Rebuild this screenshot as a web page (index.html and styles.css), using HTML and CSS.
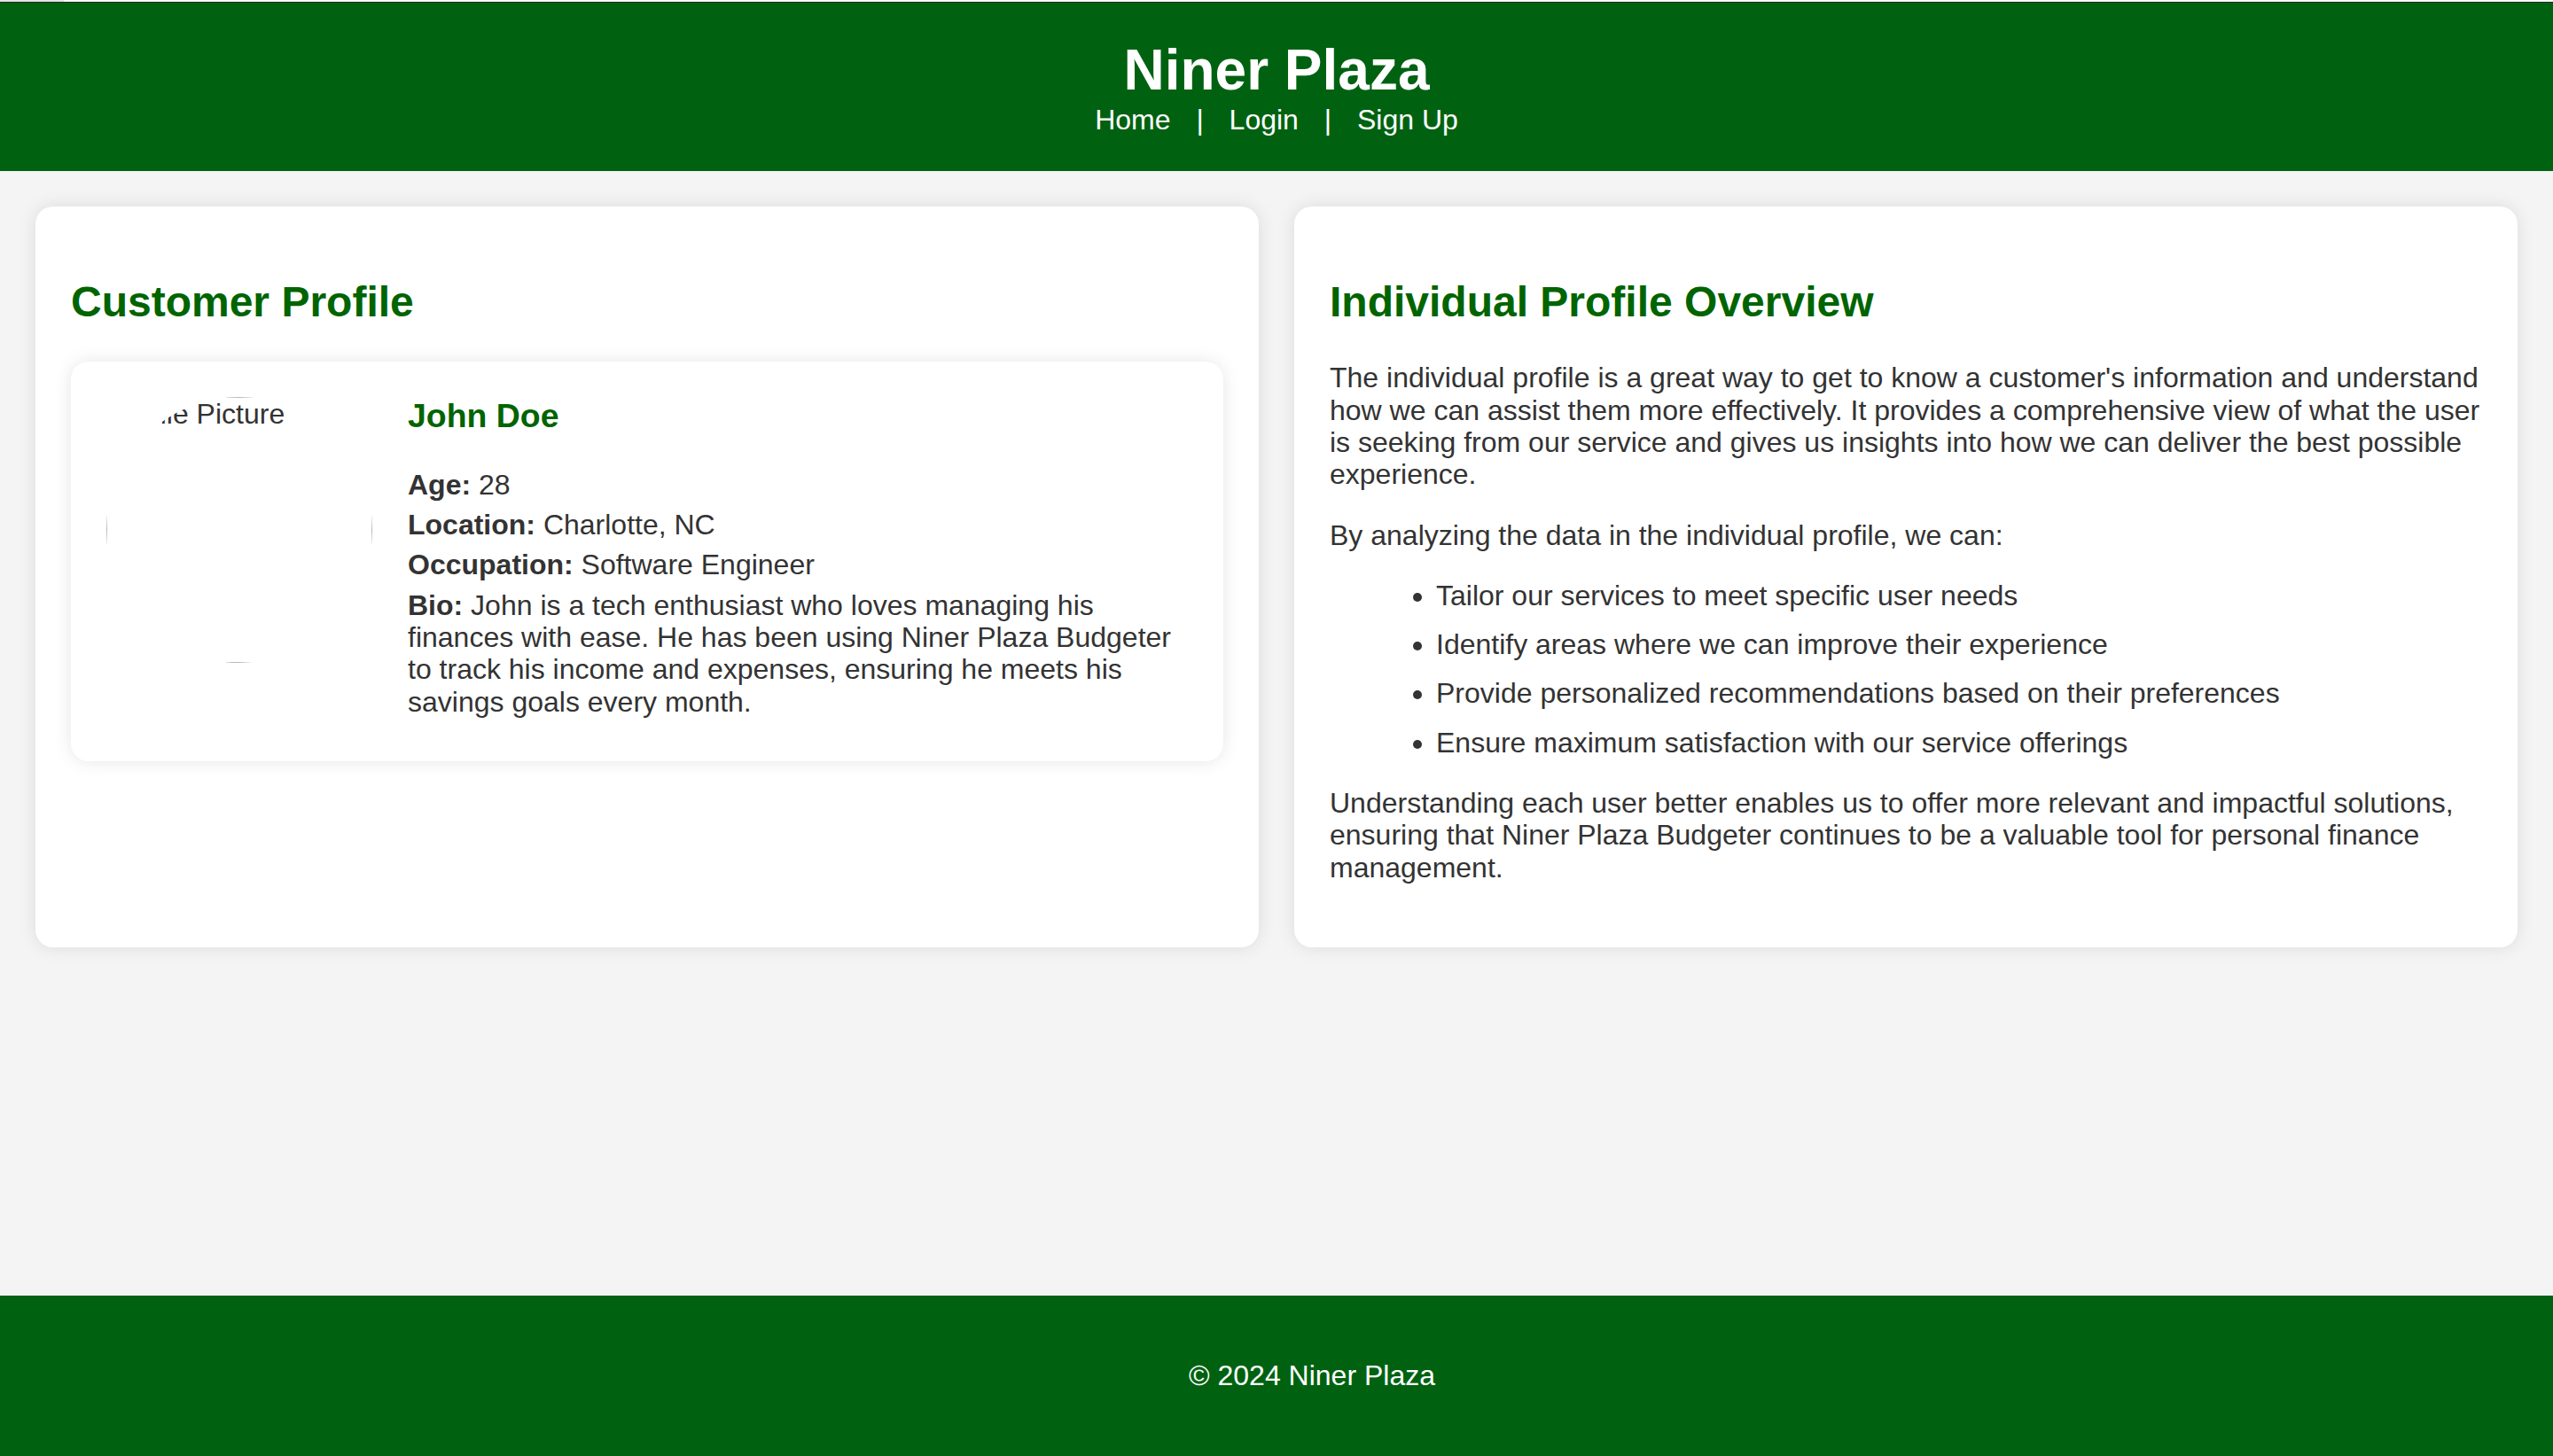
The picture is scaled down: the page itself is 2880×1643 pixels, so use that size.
FILE: index.html
```html
<!DOCTYPE html>
<html lang="en">
<head>
<meta charset="UTF-8">
<title>Niner Plaza - Customer Profile</title>
<link rel="stylesheet" href="styles.css">
</head>
<body>
<div class="topbar"></div>
<header class="site-header">
  <h1 class="site-title">Niner Plaza</h1>
  <nav class="site-nav">
    <a href="#">Home</a> | <a href="#">Login</a> | <a href="#">Sign Up</a>
  </nav>
</header>
<main class="content">
  <section class="card">
    <h2 class="card-title">Customer Profile</h2>
    <div class="profile">
      <div class="avatar"><div class="avatar-alt">Profile Picture</div></div>
      <div class="profile-info">
        <h3 class="profile-name">John Doe</h3>
        <p class="profile-line"><strong>Age:</strong> 28</p>
        <p class="profile-line"><strong>Location:</strong> Charlotte, NC</p>
        <p class="profile-line"><strong>Occupation:</strong> Software Engineer</p>
        <p class="profile-line"><strong>Bio:</strong> John is a tech enthusiast who loves managing his finances with ease. He has been using Niner Plaza Budgeter to track his income and expenses, ensuring he meets his savings goals every month.</p>
      </div>
    </div>
  </section>
  <section class="card">
    <h2 class="card-title">Individual Profile Overview</h2>
    <p class="text">The individual profile is a great way to get to know a customer's information and understand how we can assist them more effectively. It provides a comprehensive view of what the user is seeking from our service and gives us insights into how we can deliver the best possible experience.</p>
    <p class="text">By analyzing the data in the individual profile, we can:</p>
    <ul class="list">
      <li>Tailor our services to meet specific user needs</li>
      <li>Identify areas where we can improve their experience</li>
      <li>Provide personalized recommendations based on their preferences</li>
      <li>Ensure maximum satisfaction with our service offerings</li>
    </ul>
    <p class="text">Understanding each user better enables us to offer more relevant and impactful solutions, ensuring that Niner Plaza Budgeter continues to be a valuable tool for personal finance management.</p>
  </section>
</main>
<footer class="site-footer">
  <p class="footer-text">&copy; 2024 Niner Plaza</p>
</footer>
</body>
</html>
```

FILE: styles.css
```css
html, body {
  margin: 0;
  padding: 0;
}

body {
  font-family: "Liberation Sans", Arial, Helvetica, sans-serif;
  font-size: 32px;
  line-height: 36.3px;
  color: #333;
  background: #f4f4f4;
  min-height: 100vh;
  display: flex;
  flex-direction: column;
}

.topbar {
  height: 2px;
  background: linear-gradient(to right, #e4e4e4 72px, #fafafa 72px);
}

.site-header {
  background: #006211;
  border-top: 1px solid #1e2e1e;
  color: #fff;
  text-align: center;
  padding: 40px;
}

.site-title {
  margin: 0;
  font-size: 64px;
  font-weight: bold;
  line-height: 73.6px;
}

.site-nav {
  font-size: 32px;
  line-height: 36.8px;
}

.site-nav a {
  color: #fff;
  text-decoration: none;
  margin: 0 20px;
}

.content {
  flex: 1;
  padding: 40px;
  display: grid;
  grid-template-columns: 1fr 1fr;
  gap: 40px;
  align-content: start;
}

.card {
  background: #fff;
  border-radius: 20px;
  padding: 40px;
  box-shadow: 0 0 20px rgba(0, 0, 0, 0.1);
}

.card-title {
  color: #006400;
  font-size: 48px;
  line-height: 55px;
  margin: 40px 0;
}

.profile {
  display: flex;
  align-items: flex-start;
  gap: 40px;
  padding: 40px;
  background: #fff;
  border-radius: 20px;
  box-shadow: 0 0 20px rgba(0, 0, 0, 0.1);
}

.avatar {
  flex: 0 0 300px;
  width: 300px;
  height: 300px;
  border-radius: 50%;
  overflow: hidden;
}

.avatar-alt {
  box-sizing: border-box;
  width: 300px;
  height: 300px;
  border: 1px solid #b8b8b8;
  padding: 0 1px;
  line-height: 36.8px;
  white-space: nowrap;
}

.profile-info {
  flex: 1;
  min-width: 0;
}

.profile-name {
  color: #006400;
  font-size: 37.44px;
  line-height: 43px;
  margin: 0 0 37.44px;
}

.profile-line {
  margin: 9px 0;
}

.text {
  margin: 32px 0;
}

.list {
  margin: 32px 0;
  padding-left: 120px;
}

.list li {
  margin: 19px 0;
}

.site-footer {
  background: #006211;
  color: #fff;
  text-align: center;
  padding: 40px 0 40px 80px;
}

.footer-text {
  margin: 32px 0;
  line-height: 36.8px;
}
```
